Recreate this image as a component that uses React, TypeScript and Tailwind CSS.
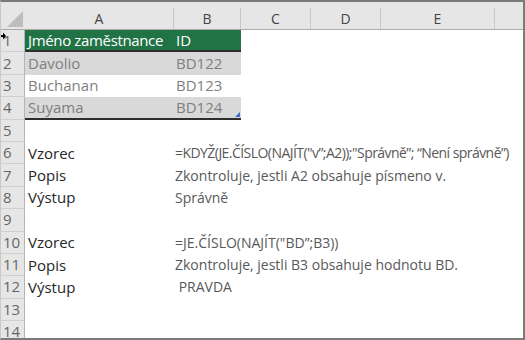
import React from 'react';

// Excel-like sheet: table on rows 1-4, explanations of formulas below

const font = { fontFamily: '"Open Sans", "Noto Sans", "Liberation Sans", sans-serif' };

const columns = [
  { label: 'A', w: 'w-[149px]' },
  { label: 'B', w: 'w-[67px]' },
  { label: 'C', w: 'w-[70px]' },
  { label: 'D', w: 'w-[70px]' },
  { label: 'E', w: 'w-[114px]' },
];

const tableRows = [
  { name: 'Davolio', id: 'BD122', bg: 'bg-[#d9d9d9]' },
  { name: 'Buchanan', id: 'BD123', bg: 'bg-white' },
  { name: 'Suyama', id: 'BD124', bg: 'bg-[#d9d9d9]' },
];

const notes: { label: string; value: string; tight?: boolean }[] = [
  { label: '', value: '' },
  { label: 'Vzorec', value: '=KDYŽ(JE.ČÍSLO(NAJÍT("v”;A2));"Správně”; “Není správně”)', tight: true },
  { label: 'Popis', value: 'Zkontroluje, jestli A2 obsahuje písmeno v.' },
  { label: 'Výstup', value: 'Správně' },
  { label: '', value: '' },
  { label: 'Vzorec', value: '=JE.ČÍSLO(NAJÍT("BD”;B3))' },
  { label: 'Popis', value: 'Zkontroluje, jestli B3 obsahuje hodnotu BD.' },
  { label: 'Výstup', value: '\u00a0PRAVDA' },
  { label: '', value: '' },
  { label: '', value: '' },
];

function RowHead({ n }: { n: number }) {
  return (
    <div className="w-[24px] shrink-0 h-full bg-[#e6e6e6] border-r border-b border-r-[#b4b4b4] border-b-[#cfcfcf] flex items-center pl-[2px] text-[15px] text-[#666] leading-none">
      {n}
    </div>
  );
}

export default function App() {
  return (
    <div
      className="w-[525px] h-[340px] bg-white border-t-2 border-r-2 border-b-2 border-l border-t-[#7a7a7a] border-r-[#7a7a7a] border-b-[#7a7a7a] border-l-[#c8c8c8] overflow-hidden relative"
      style={font}
    >
      {/* column headers */}
      <div className="flex h-[28px] bg-[#e6e6e6] border-b border-[#ababab]">
        <div className="w-[24px] shrink-0 relative">
          <svg width="24" height="28" className="absolute left-0 top-0">
            <polygon points="6,25 22,25 22,9" fill="#bdbdbd" />
          </svg>
        </div>
        {columns.map((c) => (
          <div key={c.label} className={`${c.w} shrink-0 flex flex-col`}>
            <div className="h-[6px]" />
            <div className="flex-1 border-r border-[#c8c8c8] flex items-center justify-center text-[14px] text-[#444]">
              {c.label}
            </div>
          </div>
        ))}
        <div className="flex-1" />
      </div>

      {/* row 1: table header */}
      <div className="flex h-[22.4px] relative">
        <RowHead n={1} />
        <div className="w-[216px] shrink-0 flex bg-[#217346] border-b-2 border-[#2e2e2e] text-white text-[15px] leading-none">
          <div className="w-[149px] flex items-center pl-[3px] tracking-[-0.35px]">Jméno zaměstnance</div>
          <div className="w-[67px] flex items-center pl-[2px]">ID</div>
        </div>
        <svg width="6" height="8" viewBox="0 0 6 8" className="absolute -left-px top-[2px]">
          <path d="M0 3 H3 V0.5 L6 4 L3 7.5 V5 H0 Z" fill="#000" />
        </svg>
      </div>

      {/* rows 2-4 */}
      {tableRows.map((r, i) => (
        <div key={r.id} className="flex h-[22.4px]">
          <RowHead n={i + 2} />
          <div
            className={`w-[216px] shrink-0 flex relative ${r.bg} text-[#7f7f7f] text-[15px] leading-none ${
              i === 2 ? 'border-b-2 border-[#2e2e2e]' : ''
            }`}
          >
            <div className="w-[149px] flex items-center pl-[3px]">{r.name}</div>
            <div className="w-[67px] flex items-center pl-[2px]">{r.id}</div>
            {i === 2 && (
              <svg width="5" height="5" className="absolute right-[1px] bottom-[1px]">
                <polygon points="0,5 5,5 5,0" fill="#3b6fc6" />
              </svg>
            )}
          </div>
        </div>
      ))}

      {/* rows 5-14 */}
      {notes.map((r, i) => (
        <div key={i} className="flex h-[22.4px]">
          <RowHead n={i + 5} />
          <div className="w-[149px] shrink-0 flex items-center pl-[3px] text-[15px] text-[#262626] leading-none">
            {r.label}
          </div>
          <div
            className={`flex-1 flex items-center pl-[1px] text-[14px] text-[#595959] whitespace-nowrap leading-none ${
              r.tight ? 'tracking-[-0.55px]' : ''
            }`}
          >
            {r.value}
          </div>
        </div>
      ))}
    </div>
  );
}
